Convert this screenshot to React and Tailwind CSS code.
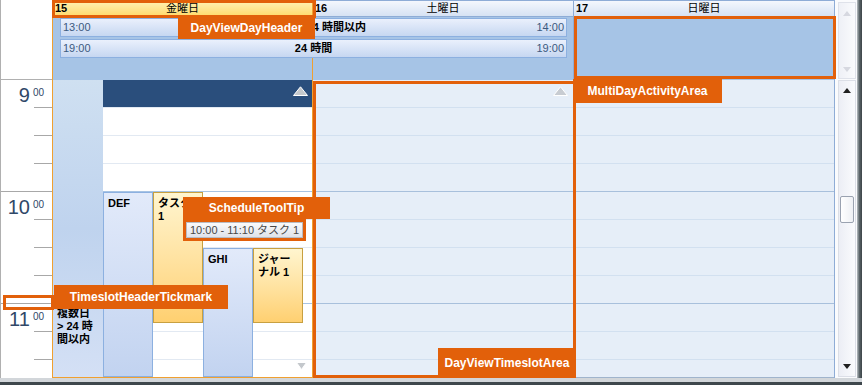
import React from "react";

const slotRows = [
  "row-start-1",
  "row-start-2",
  "row-start-3",
  "row-start-4",
  "row-start-5",
  "row-start-6",
  "row-start-7",
  "row-start-8",
  "row-start-9",
  "row-start-10",
  "row-start-11",
];

function UpTri({ className, fill = "#c4c8cc" }) {
  return (
    <svg className={className} width="15" height="10" viewBox="0 0 15 10">
      <polygon points="0.5,9.5 14.5,9.5 7.5,0.8" fill={fill} stroke="#ffffff" strokeWidth="1" />
    </svg>
  );
}

function DownTri({ className }) {
  return (
    <svg className={className} width="11" height="8" viewBox="0 0 11 8">
      <polygon points="0.5,0.5 10.5,0.5 5.5,7.5" fill="#c4c8cc" stroke="#ffffff" strokeWidth="1" />
    </svg>
  );
}

function SmallArrow({ up, color }) {
  return (
    <svg width="8" height="5" viewBox="0 0 8 5">
      {up ? (
        <polygon points="0,5 8,5 4,0" fill={color} />
      ) : (
        <polygon points="0,0 8,0 4,5" fill={color} />
      )}
    </svg>
  );
}

function Bar({ start, title, end }) {
  return (
    <div className="h-[19px] border border-[#8cb0e0] bg-linear-to-b from-[#eaf0fc] to-[#c6d7f1] grid grid-cols-[auto_1fr_auto] items-center px-[2px] text-[11px] leading-none">
      <span className="text-[#3c5a80]">{start}</span>
      <span className="text-center font-bold text-black">{title}</span>
      <span className="text-[#3c5a80]">{end}</span>
    </div>
  );
}

function DayHeader({ num, name }) {
  return (
    <div className="w-[261px] h-[17px] border-t border-r border-b border-[#8eacd6] bg-linear-to-b from-[#f4f7fd] to-[#d6e2f3] grid grid-cols-[1fr_auto_1fr] items-center px-[2px] text-[11px] leading-none text-black">
      <span className="font-bold">{num}</span>
      <span>{name}</span>
      <span />
    </div>
  );
}

function DayColumn({ children }) {
  const slots = [0, 1, 2, 3, 4, 5, 6, 7, 8, 9, 10];
  return (
    <div className="relative w-[261px] h-[298px] flex flex-col bg-[#e6eef8] border-r border-[#8eacd6]">
      {slots.map((i) =>
        i === 10 ? (
          <div key={i} className="h-[18px] border-b border-[#a0b4cc]" />
        ) : i % 4 === 3 ? (
          <div key={i} className="h-[28px] border-b border-[#a8c0dc]" />
        ) : (
          <div key={i} className="h-[28px] border-b border-[#d2e0f0]" />
        )
      )}
      {children}
    </div>
  );
}

function RulerSlot({ kind, h = "h-[28px]", label }) {
  return (
    <div className={"flex flex-col " + h}>
      <div className="flex-1 flex items-start justify-end pr-[8px] pt-[5px] text-[#304868]">
        {label ? (
          <>
            <span className="text-[20px] leading-none">{label}</span>
            <span className="text-[10px] leading-none ml-[3px] mt-[3px]">00</span>
          </>
        ) : null}
      </div>
      {kind === "tick" ? (
        <div className="h-px ml-[33px] bg-[#a8a8a8]" />
      ) : kind === "hour" ? (
        <div className="h-px bg-[#a8a8a8]" />
      ) : null}
    </div>
  );
}

export default function App() {
  return (
    <div className="relative w-[862px] h-[385px] overflow-hidden flex flex-col bg-white font-['Liberation_Sans','Noto_Sans_CJK_JP',sans-serif]">
      <div className="flex h-[378px]">
        <div className="w-[857px] flex flex-col">
          {/* Top row: headers + multi-day area */}
          <div className="flex h-[80px]">
            <div className="w-[52px] h-[80px] border-l border-b border-[#b0b0b0] bg-white" />
            <div className="w-[783px] flex flex-col">
              <div className="flex">
                <div className="w-[261px] h-[17px] border-l border-r border-[#f0a030] bg-linear-to-b from-[#fff4b8] to-[#ffd866] grid grid-cols-[1fr_auto_1fr] items-center px-[2px] text-[11px] leading-none text-black">
                  <span className="font-bold">15</span>
                  <span>金曜日</span>
                  <span />
                </div>
                <DayHeader num="16" name="土曜日" />
                <DayHeader num="17" name="日曜日" />
              </div>
              <div className="grid h-[63px] bg-[#a6c4e6]">
                <div className="col-start-1 row-start-1 flex">
                  <div className="w-[261px] border-l border-r border-[#f0a030]" />
                  <div className="w-[261px] border-r border-[#8eacd6]" />
                  <div className="w-[261px] border-r border-[#8eacd6]" />
                </div>
                <div className="col-start-1 row-start-1 flex flex-col gap-[2px] pt-[1px] pl-[8px] pr-[268px]">
                  <Bar start="13:00" title={"複数日 < 24 時間以内"} end="14:00" />
                  <Bar start="19:00" title="24 時間" end="19:00" />
                </div>
              </div>
            </div>
            <div className="w-[22px] h-[80px] bg-[#fafbfd] flex pl-[3px] pt-[2px] pb-[1px]">
              <div className="w-[18px] h-[77px] bg-linear-to-r from-[#eef0f6] to-[#fafbfd] border border-[#dfe2ea] flex flex-col items-center pt-[8px] pb-[6px]">
                <SmallArrow up color="#d6d8e0" />
                <div className="flex-1" />
                <SmallArrow color="#d6d8e0" />
              </div>
            </div>
          </div>

          {/* Bottom row: time slots */}
          <div className="flex h-[298px]">
            <div className="w-[52px] h-[298px] border-l border-[#b0b0b0] bg-white flex flex-col">
              <RulerSlot kind="tick" label="9" />
              <RulerSlot kind="tick" />
              <RulerSlot kind="tick" />
              <RulerSlot kind="hour" />
              <RulerSlot kind="tick" label="10" />
              <RulerSlot kind="tick" />
              <RulerSlot kind="tick" />
              <RulerSlot kind="hour" />
              <RulerSlot kind="tick" label="11" />
              <RulerSlot kind="tick" />
              <RulerSlot kind="none" h="h-[18px]" />
            </div>

            {/* Friday */}
            <div className="relative w-[261px] h-[298px] border-l border-r border-b border-[#f0a030] bg-white grid grid-cols-[50px_50px_50px_50px_50px_1fr] grid-rows-[repeat(10,28px)_1fr] text-[11px] leading-[13px] font-bold text-black">
              {slotRows.map((r, i) =>
                i === 10 ? (
                  <div key={i} className={"col-start-2 col-end-7 " + r} />
                ) : i % 4 === 3 ? (
                  <div key={i} className={"col-start-2 col-end-7 border-b border-[#a8c4e4] " + r} />
                ) : (
                  <div key={i} className={"col-start-2 col-end-7 border-b border-[#e2e9f2] " + r} />
                )
              )}
              <div className="col-start-1 row-start-1 row-end-12 bg-linear-to-b from-[#cfe0f1] via-[#bfd3ee] to-[#d4e0f5] pl-[4px] pr-[7px] pt-[227px]">
                複数日 &gt; 24 時間以内
              </div>
              <div className="col-start-2 col-end-7 row-start-1 self-start h-[27px] bg-[#2a4e7c] flex items-start justify-end pr-[4px] pt-[6px]">
                <UpTri />
              </div>
              <div className="col-start-2 row-start-5 row-end-12 border border-[#8cb0e0] bg-linear-to-b from-[#e2eafa] to-[#c2d3f0] px-[4px] pt-[4px]">
                DEF
              </div>
              <div className="col-start-3 row-start-5 row-end-12 self-start h-[131px] border border-[#c8a040] bg-linear-to-b from-[#fff5cf] to-[#ffd070] px-[4px] pt-[4px]">
                タスク 1
              </div>
              <div className="col-start-4 row-start-7 row-end-12 border border-[#8cb0e0] bg-linear-to-b from-[#e2eafa] to-[#c2d3f0] px-[4px] pt-[4px]">
                GHI
              </div>
              <div className="col-start-5 row-start-7 row-end-12 self-start h-[75px] border border-[#c8a040] bg-linear-to-b from-[#fff5cf] to-[#ffd070] px-[4px] pt-[4px]">
                ジャーナル 1
              </div>
              <div className="col-start-5 col-end-7 row-start-11 flex items-end justify-end pr-[5px] pb-[7px]">
                <DownTri />
              </div>
            </div>

            <DayColumn>
              <UpTri className="absolute right-[5px] top-[6px]" fill="#c8ccd2" />
            </DayColumn>
            <DayColumn />

            <div className="w-[22px] h-[298px] bg-[#fafbfd] flex pl-[3px] pb-[1px]">
              <div className="w-[18px] h-[297px] bg-linear-to-r from-[#eceef5] to-[#fafbfd] border border-[#dcdfe7] flex flex-col items-center pt-[7px] pb-[7px]">
                <SmallArrow up color="#202020" />
                <div className="mt-[103px] w-[14px] h-[27px] rounded-[2px] border border-[#9aa2b0] bg-linear-to-r from-[#ffffff] to-[#eef0f4]" />
                <div className="flex-1" />
                <SmallArrow color="#202020" />
              </div>
            </div>
          </div>
        </div>
        <div className="w-[5px] h-[378px] bg-linear-to-r from-[#b8bec2] via-[#5a6468] to-[#3c4448]" />
      </div>
      <div className="h-[7px] flex flex-col">
        <div className="h-[4px] bg-[#d2d6da]" />
        <div className="h-[3px] bg-[#3e474c]" />
      </div>

      {/* Annotation overlays */}
      <div className="absolute left-[52px] top-0 w-[264px] h-[18px] border-[3px] border-[#e2600a]" />
      <div className="absolute left-[178px] top-[17px] w-[137px] h-[22px] bg-[#e2600a] flex items-center justify-center text-white font-bold text-[12px]">
        DayViewDayHeader
      </div>

      <div className="absolute left-[574px] top-[16px] w-[262px] h-[63px] border-[3px] border-[#e2600a]" />
      <div className="absolute left-[573px] top-[79px] w-[149px] h-[24px] bg-[#e2600a] flex items-center justify-center text-white font-bold text-[12px]">
        MultiDayActivityArea
      </div>

      <div className="absolute left-[313px] top-[81px] w-[263px] h-[297px] border-[3px] border-[#e2600a]" />
      <div className="absolute left-[438px] top-[348px] w-[138px] h-[30px] bg-[#e2600a] flex items-center justify-center text-white font-bold text-[12px]">
        DayViewTimeslotArea
      </div>

      <div className="absolute left-[183px] top-[197px] w-[147px] h-[22px] bg-[#e2600a] flex items-center justify-center text-white font-bold text-[12px]">
        ScheduleToolTip
      </div>
      <div className="absolute left-[183px] top-[219px] w-[123px] h-[22px] border-[3px] border-[#e2600a] bg-[#e2600a]">
        <div className="w-full h-full border border-[#b8bcc4] bg-linear-to-b from-[#fafafa] to-[#dfe3ea] flex items-center pl-[3px] text-[11px] leading-none text-[#484848] whitespace-nowrap">
          10:00 - 11:10 タスク 1
        </div>
      </div>

      <div className="absolute left-[3px] top-[295px] w-[51px] h-[15px] border-[3px] border-[#e2600a]" />
      <div className="absolute left-[54px] top-[285px] w-[174px] h-[24px] bg-[#e2600a] flex items-center justify-center text-white font-bold text-[12px]">
        TimeslotHeaderTickmark
      </div>
    </div>
  );
}
